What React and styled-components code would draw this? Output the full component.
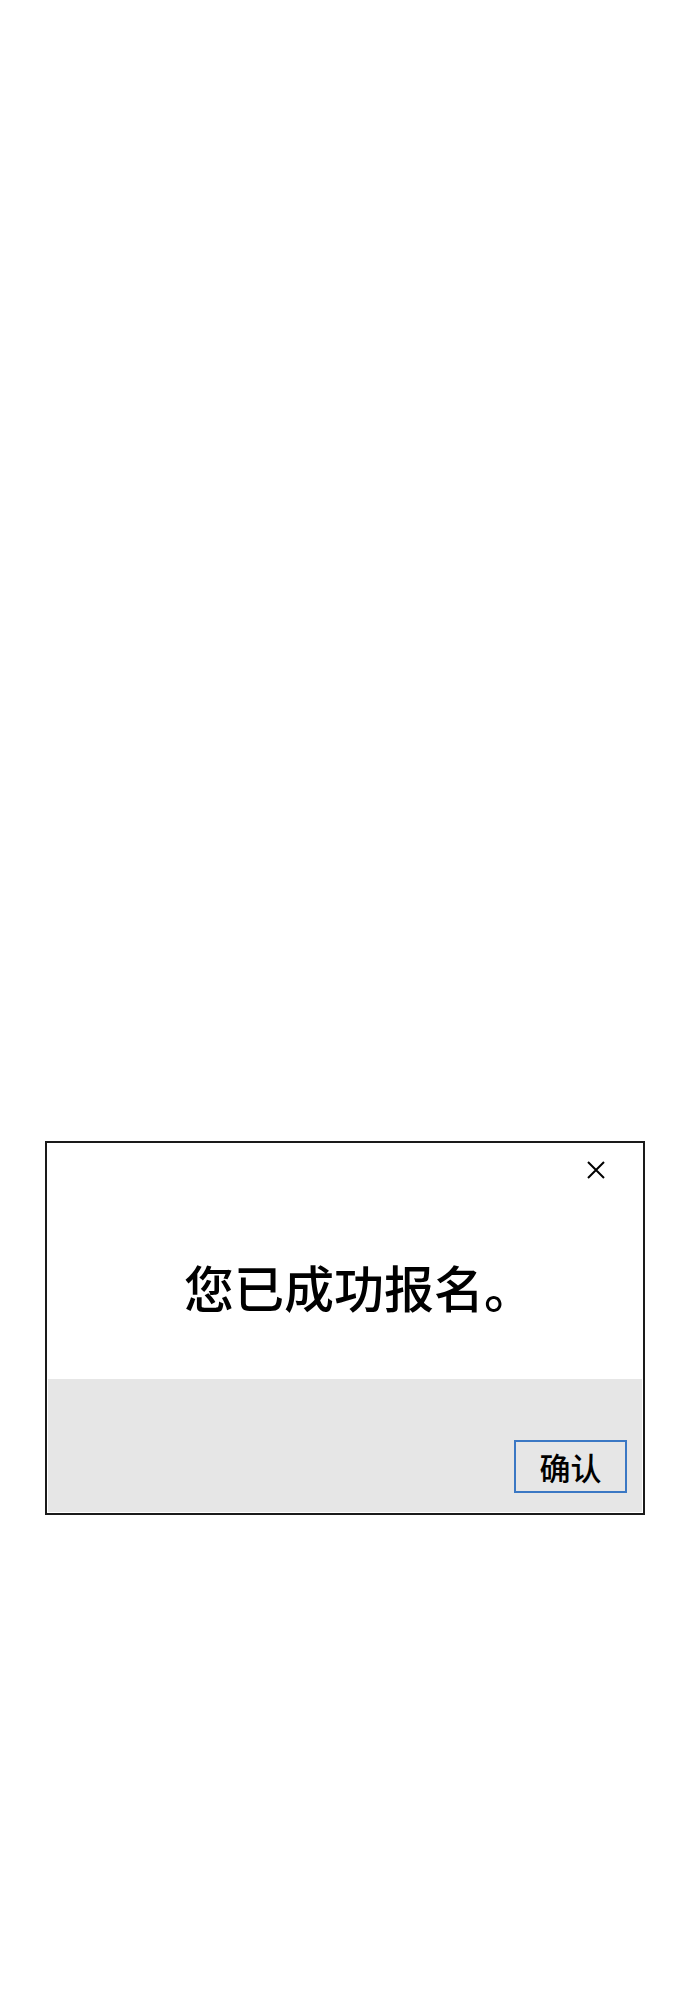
import React from "react";
import styled, { createGlobalStyle } from "styled-components";

const GlobalStyle = createGlobalStyle`
  body {
    margin: 0;
    background: #fff;
    font-family: "Noto Sans CJK SC", "Noto Sans", sans-serif;
  }
`;

const Page = styled.div`
  min-height: 2000px;
  padding: 1141px 0 0 45px;
  box-sizing: border-box;
`;

const Dialog = styled.div`
  width: 600px;
  height: 374px;
  box-sizing: border-box;
  border: 2px solid #1a1a1a;
  background: #fff;
  display: flex;
  flex-direction: column;
`;

const Header = styled.div`
  height: 54px;
  display: flex;
  justify-content: flex-end;
  align-items: center;
  padding-right: 33px;
`;

const CloseButton = styled.button`
  width: 28px;
  height: 28px;
  padding: 0;
  border: none;
  background: none;
  display: flex;
  align-items: center;
  justify-content: center;
  cursor: pointer;
`;

const Message = styled.div`
  height: 182px;
  box-sizing: border-box;
  display: flex;
  align-items: center;
  justify-content: center;
  font-size: 50px;
  font-weight: 500;
  color: #000;
  padding: 0 0 5px 28px;
`;

const Footer = styled.div`
  flex: 1;
  background: #e6e6e6;
  margin: 0 1px 1px 1px;
  display: flex;
  justify-content: flex-end;
  align-items: flex-end;
  padding: 0 15px 19px 0;
`;

const ConfirmButton = styled.button`
  width: 113px;
  height: 53px;
  box-sizing: border-box;
  border: 2px solid #3b78c4;
  background: transparent;
  font-family: "Noto Sans CJK SC", sans-serif;
  font-size: 31px;
  font-weight: 500;
  color: #000;
  padding: 0;
  cursor: pointer;
`;

function CloseIcon() {
  return (
    <svg width="20" height="20" viewBox="0 0 20 20">
      <path d="M2 2 L18 18 M18 2 L2 18" stroke="#000" strokeWidth="2" fill="none" />
    </svg>
  );
}

export default function App() {
  return (
    <Page>
      <GlobalStyle />
      <Dialog>
        <Header>
          <CloseButton aria-label="关闭">
            <CloseIcon />
          </CloseButton>
        </Header>
        <Message>您已成功报名。</Message>
        <Footer>
          <ConfirmButton>确认</ConfirmButton>
        </Footer>
      </Dialog>
    </Page>
  );
}
